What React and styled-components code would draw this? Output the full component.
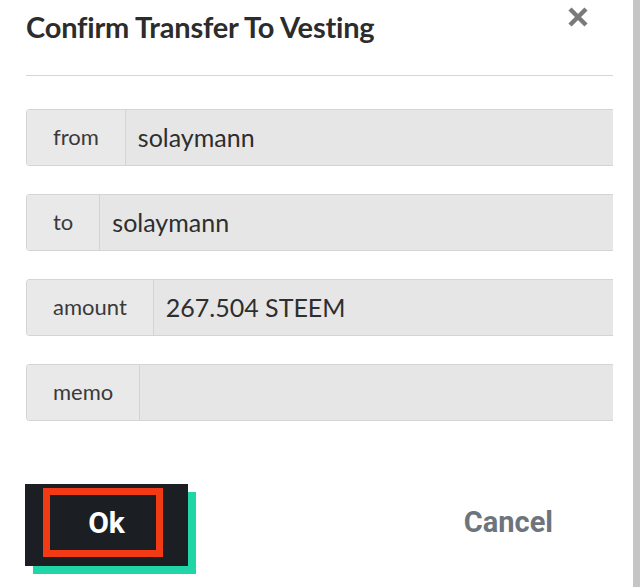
import React from "react";
import styled, { createGlobalStyle } from "styled-components";

const Global = createGlobalStyle`
  html, body { margin: 0; padding: 0; background: #fff; }
  body { font-family: Lato, "Open Sans", sans-serif; }
`;

const Page = styled.div`
  display: flex;
  width: 640px;
  height: 587px;
  overflow: hidden;
  background: #fff;
`;

const Modal = styled.div`
  flex: 1;
  display: flex;
  flex-direction: column;
  padding: 0 20px 0 26px;
`;

const ScrollTrack = styled.div`
  width: 7px;
  background: #c6c6c6;
`;

const Header = styled.div`
  position: relative;
  height: 75px;
  border-bottom: 1.5px solid #d6d6d6;
  h3 {
    margin: 0;
    padding-top: 9px;
    font-family: Lato, sans-serif;
    font-weight: 700;
    font-size: 29px;
    color: #2c2c2c;
    letter-spacing: -0.2px;
  }
`;

const Close = styled.button`
  position: absolute;
  top: 6px;
  right: 24px;
  border: none;
  background: none;
  padding: 0;
  cursor: pointer;
`;

const Fields = styled.div`
  display: flex;
  flex-direction: column;
  gap: 28px;
  margin-top: 33px;
`;

const Group = styled.div`
  display: flex;
  height: 55px;
  border: 1px solid #d4d4d4;
  border-right: none;
  border-radius: 4px 0 0 4px;
  overflow: hidden;
`;

const Label = styled.div`
  display: flex;
  align-items: center;
  padding: 0 26px 2px;
  background: #e9e9e9;
  border-right: 1px solid #d4d4d4;
  font-size: 22px;
  color: #3a3a3a;
`;

const Value = styled.div`
  flex: 1;
  display: flex;
  align-items: center;
  padding: 0 12px 2px;
  background: #e6e6e6;
  font-size: 25px;
  color: #2e2e2e;
`;

const Footer = styled.div`
  display: flex;
  align-items: center;
  justify-content: space-between;
  margin-top: 63px;
  padding-right: 60px;
`;

const OkButton = styled.button`
  width: 163px;
  height: 82px;
  margin-left: -1px;
  background: #1b1f24;
  border: none;
  box-shadow: 8px 8px 0 #20d6a6;
  padding: 0;
  display: flex;
  align-items: center;
  justify-content: center;
  cursor: pointer;
  span {
    display: flex;
    align-items: center;
    justify-content: center;
    box-sizing: border-box;
    width: 120px;
    height: 69px;
    padding-left: 8px;
    border: 7px solid #f23b14;
    color: #fff;
    font-family: Roboto, sans-serif;
    font-weight: 700;
    font-size: 30px;
    margin-left: -8px;
    margin-top: -6px;
  }
`;

const CancelButton = styled.button`
  border: none;
  background: none;
  padding: 0;
  font-family: Roboto, sans-serif;
  font-weight: 700;
  font-size: 29px;
  color: #6e747c;
  cursor: pointer;
  margin-top: -6px;
`;

const rows = [
  { label: "from", value: "solaymann" },
  { label: "to", value: "solaymann" },
  { label: "amount", value: "267.504 STEEM" },
  { label: "memo", value: "" },
];

export default function App() {
  return (
    <>
      <Global />
      <Page>
        <Modal>
          <Header>
            <h3>Confirm Transfer To Vesting</h3>
            <Close aria-label="close">
              <svg width="22" height="22" viewBox="0 0 22 22">
                <path d="M3 3 L19 19 M19 3 L3 19" stroke="#7a7a7a" strokeWidth="4.5" strokeLinecap="butt" />
              </svg>
            </Close>
          </Header>
          <Fields>
            {rows.map((r) => (
              <Group key={r.label}>
                <Label>{r.label}</Label>
                <Value>{r.value}</Value>
              </Group>
            ))}
          </Fields>
          <Footer>
            <OkButton><span>Ok</span></OkButton>
            <CancelButton>Cancel</CancelButton>
          </Footer>
        </Modal>
        <ScrollTrack />
      </Page>
    </>
  );
}
